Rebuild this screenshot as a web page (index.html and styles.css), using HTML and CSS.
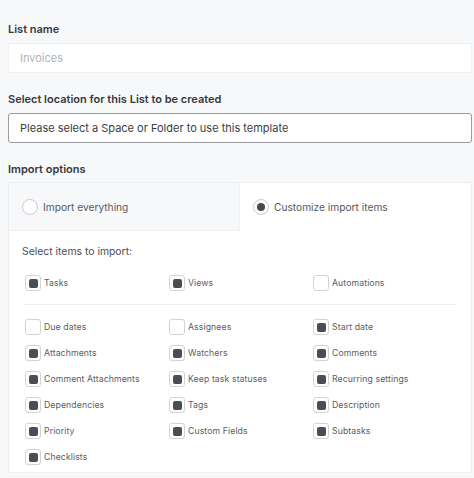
FILE: index.html
```html
<!DOCTYPE html>
<html>
<head>
<meta charset="utf-8">
<link rel="stylesheet" href="styles.css">
</head>
<body>
<div class="page">
  <div class="label">List name</div>
  <div class="input input-soft"><span class="placeholder">Invoices</span></div>

  <div class="label">Select location for this List to be created</div>
  <div class="input input-select"><span class="value">Please select a Space or Folder to use this template</span></div>

  <div class="label">Import options</div>
  <div class="panel">
    <div class="tabs">
      <div class="tab tab-off"><span class="radio"></span><span class="tab-text">Import everything</span></div>
      <div class="tab tab-on"><span class="radio radio-on"></span><span class="tab-text">Customize import items</span></div>
    </div>
    <div class="panel-body">
      <div class="subhead">Select items to import:</div>
      <div class="grid grid-top">
        <div class="item"><span class="cb on"></span>Tasks</div>
        <div class="item"><span class="cb on"></span>Views</div>
        <div class="item"><span class="cb"></span>Automations</div>
      </div>
      <div class="divider"></div>
      <div class="grid">
        <div class="item"><span class="cb"></span>Due dates</div>
        <div class="item"><span class="cb"></span>Assignees</div>
        <div class="item"><span class="cb on"></span>Start date</div>
        <div class="item"><span class="cb on"></span>Attachments</div>
        <div class="item"><span class="cb on"></span>Watchers</div>
        <div class="item"><span class="cb on"></span>Comments</div>
        <div class="item"><span class="cb on"></span>Comment Attachments</div>
        <div class="item"><span class="cb on"></span>Keep task statuses</div>
        <div class="item"><span class="cb on"></span>Recurring settings</div>
        <div class="item"><span class="cb on"></span>Dependencies</div>
        <div class="item"><span class="cb on"></span>Tags</div>
        <div class="item"><span class="cb on"></span>Description</div>
        <div class="item"><span class="cb on"></span>Priority</div>
        <div class="item"><span class="cb on"></span>Custom Fields</div>
        <div class="item"><span class="cb on"></span>Subtasks</div>
        <div class="item"><span class="cb on"></span>Checklists</div>
      </div>
    </div>
  </div>
</div>
</body>
</html>
```

FILE: styles.css
```css
* { box-sizing: border-box; }
html, body {
  margin: 0;
  padding: 0;
  background: #f7f8f9;
  font-family: "Inter", "Liberation Sans", sans-serif;
  color: #2b2e33;
}
.page {
  padding: 21px 2px 0 8px;
  height: 478px;
  overflow: hidden;
}
.label {
  font-size: 11px;
  font-weight: 600;
  line-height: 16px;
  height: 16px;
  color: #36393e;
  margin-bottom: 6px;
}
.input {
  height: 30px;
  display: flex;
  align-items: center;
  padding-left: 11px;
  background: #fff;
  font-size: 11px;
  margin-bottom: 18px;
}
.input-soft {
  border: 1px solid #eef0f2;
  border-radius: 2px;
}
.input-select {
  border: 1px solid #9a9ca0;
  border-radius: 3px;
  margin-top: 1px;
  margin-bottom: 18px;
}
.placeholder { color: #b0b3b8; }
.value { color: #3a3d42; }
.panel {
  border: 1px solid #eceef0;
  background: #fff;
  height: 291px;
  margin-top: -1px;
}
.tabs {
  display: flex;
  height: 48px;
}
.tab {
  display: flex;
  align-items: center;
  font-size: 10.2px;
  color: #55585d;
}
.tab-off {
  width: 231px;
  background: #f7f8fa;
  border-bottom: 1px solid #eceef0;
  border-right: 1px solid #f0f1f3;
  padding-left: 13px;
}
.tab-on {
  flex: 1;
  padding-left: 13px;
}
.radio {
  width: 16px;
  height: 16px;
  border-radius: 50%;
  border: 1px solid #c9cbce;
  background: #fff;
  margin-right: 5px;
  display: flex;
  align-items: center;
  justify-content: center;
}
.radio-on::after {
  content: "";
  width: 8px;
  height: 8px;
  border-radius: 50%;
  background: #47494e;
}
.panel-body {
  padding: 14px 14px 0 13px;
}
.subhead {
  font-size: 10.4px;
  color: #4a4d52;
  line-height: 14px;
  margin-bottom: 16px;
}
.grid {
  display: grid;
  grid-template-columns: repeat(3, 1fr);
  row-gap: 10px;
  padding-left: 3px;
}
.grid-top {
  margin-bottom: 13px;
}
.divider {
  height: 1px;
  background: #eceef0;
  margin: 0 1px 14px 2px;
}
.item {
  display: flex;
  align-items: center;
  height: 16px;
  font-size: 8.7px;
  letter-spacing: 0.1px;
  color: #5a5d62;
}
.cb {
  width: 16px;
  height: 16px;
  border: 1px solid #d0d2d5;
  border-radius: 3px;
  background: #fff;
  margin-right: 3px;
  display: flex;
  align-items: center;
  justify-content: center;
  flex-shrink: 0;
}
.cb.on::after {
  content: "";
  width: 9px;
  height: 9px;
  border-radius: 2px;
  background: #4b4d52;
}
```
